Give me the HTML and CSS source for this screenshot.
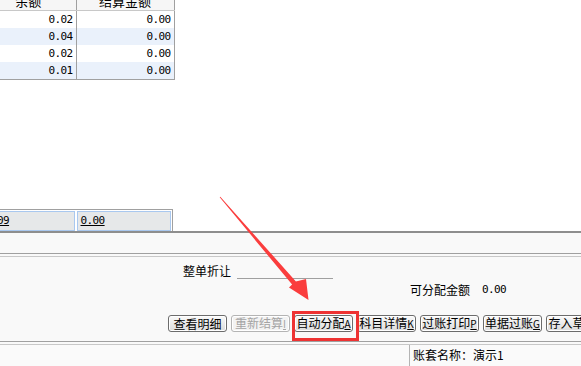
FILE: index.html
```html
<!DOCTYPE html>
<html lang="zh-CN">
<head>
    <meta charset="UTF-8">
    <meta name="viewport" content="width=device-width, initial-scale=1.0">
    <title>结算分配</title>
    <link rel="stylesheet" href="styles.css">
</head>
<body>
    <div class="grid-area">
        <table class="grid">
            <colgroup><col class="col-balance"><col class="col-settle"></colgroup>
            <thead>
                <tr><th>余额</th><th>结算金额</th></tr>
            </thead>
            <tbody>
                <tr><td>0.02</td><td>0.00</td></tr>
                <tr class="alt"><td>0.04</td><td>0.00</td></tr>
                <tr><td>0.02</td><td>0.00</td></tr>
                <tr class="alt"><td>0.01</td><td>0.00</td></tr>
            </tbody>
        </table>
        <div class="totals">
            <div class="total-cell first">0.09</div>
            <div class="total-cell second">0.00</div>
        </div>
    </div>

    <div class="panel">
        <div class="strip"></div>
        <div class="sep"></div>
        <div class="form">
            <div class="discount">
                <span>整单折让</span>
                <span class="line-input"></span>
            </div>
            <div class="alloc">
                <span>可分配金额</span>
                <span class="num">0.00</span>
            </div>
            <div class="buttons">
                <button>查看明细</button>
                <button disabled>重新结算<u>I</u></button>
                <button>自动分配<u>A</u></button>
                <button>科目详情<u>K</u></button>
                <button>过账打印<u>P</u></button>
                <button>单据过账<u>G</u></button>
                <button>存入草稿<u>S</u></button>
            </div>
        </div>
        <div class="sep"></div>
        <div class="status">
            <div class="status-left"></div>
            <div class="status-right">账套名称：演示1</div>
        </div>
    </div>

    <!-- annotation overlay -->
    <div class="mark"></div>
    <svg class="arrow" width="581" height="366" viewBox="0 0 581 366">
        <polygon points="220.3,196.7 295.9,281.4 306,279 308.5,300 289,287.5 292.1,284.6 219.7,197.3" fill="#fa3d3d"/>
    </svg>
</body>
</html>
```

FILE: styles.css
```css
body {
    margin: 0;
    width: 581px;
    height: 366px;
    overflow: hidden;
    position: relative;
    background: #fff;
    font-family: "Noto Sans CJK SC", sans-serif;
    font-size: 12px;
    color: #000;
}
.grid-area {
    height: 231px;
    display: flex;
    flex-direction: column;
    justify-content: space-between;
    overflow: hidden;
}
.grid {
    border-collapse: collapse;
    table-layout: fixed;
    width: 193px;
    margin: -8px 0 0 -19px;
}
.col-balance {
    width: 95px;
}
.col-settle {
    width: 98px;
}
.grid th, .grid td {
    border-right: 1px solid #a0a0a0;
    padding: 0 3px;
    white-space: nowrap;
    overflow: hidden;
}
.grid th {
    height: 18px;
    font-weight: normal;
    font-size: 13px;
    line-height: 18px;
    background: #f6f6f6;
    border-bottom: 1px solid #c8c8c8;
    text-align: center;
}
.grid td {
    height: 17px;
    line-height: 17px;
    text-align: right;
    font-family: "DejaVu Sans Mono", monospace;
    font-size: 11px;
    letter-spacing: -0.6px;
    background: #fff;
}
.grid tr.alt td {
    background: #eaf1fb;
}
.grid tbody tr:last-child td {
    border-bottom: 1px solid #a0a0a0;
}
.totals {
    display: flex;
    gap: 2px;
    width: 192px;
    height: 22px;
    margin-left: -19px;
    padding: 1px 1px 0 0;
    box-sizing: border-box;
    border-top: 1px solid #a0a0a0;
    border-right: 1px solid #a0a0a0;
}
.total-cell {
    box-sizing: border-box;
    height: 20px;
    line-height: 18px;
    padding-left: 3px;
    border: 1px solid #a9c8ef;
    background: #e6e8e9;
    font-family: "DejaVu Sans Mono", monospace;
    font-size: 11px;
    letter-spacing: -0.6px;
    text-decoration: underline;
}
.total-cell.first {
    width: 94px;
}
.total-cell.second {
    width: 95px;
}
.panel {
    border-top: 2px solid #8e8e8e;
    background: #f9f9f9;
    height: 133px;
}
.strip {
    height: 20px;
}
.sep {
    height: 2px;
    border-top: 1px solid #a0a0a0;
    border-bottom: 1px solid #c8c8c8;
}
.form {
    height: 84px;
    box-sizing: border-box;
    display: flex;
    flex-direction: column;
    padding-bottom: 9px;
}
.discount {
    display: flex;
    align-items: flex-end;
    margin-top: 5px;
    padding-left: 183px;
    height: 17px;
    line-height: 16px;
}
.line-input {
    width: 96px;
    height: 15px;
    margin-left: 6px;
    border-bottom: 1px solid #a0a0a0;
}
.alloc {
    display: flex;
    align-items: center;
    gap: 12px;
    padding-left: 410px;
    margin-top: 3px;
    height: 14px;
}
.num {
    font-family: "DejaVu Sans Mono", monospace;
    font-size: 11px;
    letter-spacing: -0.6px;
}
.buttons {
    display: flex;
    gap: 4px;
    margin-top: auto;
    padding-left: 168px;
}
.buttons button {
    flex: none;
    width: 59px;
    height: 17px;
    padding: 0;
    box-sizing: border-box;
    border: 1px solid #6c6c6c;
    border-radius: 3px;
    background: linear-gradient(#fafafa, #dcdcdc);
    box-shadow: inset 0 0 0 1px #fff;
    font-family: "Noto Sans CJK SC", sans-serif;
    font-size: 12px;
    line-height: 14px;
    color: #000;
    white-space: nowrap;
    overflow: hidden;
}
.buttons button u {
    font-size: 10px;
}
.buttons button:disabled {
    color: #a4a4a4;
    border-color: #b4b4b4;
    background: #f3f3f3;
}
.status {
    display: flex;
    height: 21px;
    background: #fafafa;
}
.status-left {
    width: 409px;
    border-right: 1px solid #b4b4b4;
}
.status-right {
    padding: 3px 0 0 3px;
    line-height: 14px;
}
.mark {
    position: absolute;
    left: 292px;
    top: 311px;
    width: 67px;
    height: 30px;
    box-sizing: border-box;
    border: 3px solid #ee3333;
}
.arrow {
    position: absolute;
    left: 0;
    top: 0;
    pointer-events: none;
}
```
